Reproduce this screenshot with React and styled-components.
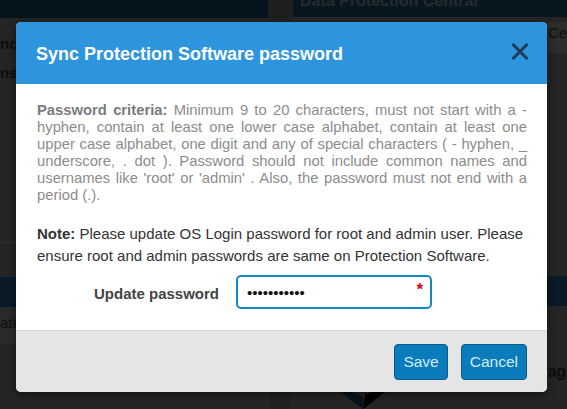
import React from "react";
import styled, { createGlobalStyle } from "styled-components";

const Global = createGlobalStyle`
  html, body { margin: 0; padding: 0; background: #242424; }
  body { font-family: "Liberation Sans", Arial, Helvetica, sans-serif; }
  * { box-sizing: border-box; }
`;

const Page = styled.div`
  position: relative;
  width: 567px;
  height: 409px;
  overflow: hidden;
  background: #252525;
  display: flex;
  flex-direction: column;
`;

const TopBar = styled.div`
  display: grid;
  grid-template-columns: 268px 25px 1fr;
  height: 18px;
  flex-shrink: 0;
`;

const NavLeft = styled.div`
  background: #05131c;
`;

const NavGap = styled.div`
  background: #1f1f1f;
`;

const Brand = styled.div`
  background: #08161f;
  overflow: hidden;
  padding-left: 7px;
  margin-bottom: 1px;
`;

const BrandText = styled.span`
  display: block;
  margin-top: -7px;
  font-size: 16px;
  line-height: 16px;
  font-weight: bold;
  color: #252b30;
  white-space: nowrap;
`;

const Main = styled.div`
  flex: 1;
  display: grid;
  grid-template-columns: 268px 25px 1fr;
`;

const Column = styled.div`
  display: flex;
  flex-direction: column;
  min-width: 0;
  overflow: hidden;
`;

const Divider = styled.div`
  background: #222;
  border-left: 1px solid #2a2a2a;
  border-right: 1px solid #2a2a2a;
`;

const NavList = styled.div`
  display: flex;
  flex-direction: column;
  padding-top: 11px;
  height: 225px;
  border-bottom: 1px solid #303030;
`;

const NavItem = styled.div`
  font-size: 15px;
  line-height: 29px;
  font-weight: bold;
  color: #0e0e0e;
  white-space: nowrap;
`;

const Spacer = styled.div`
  height: ${(p) => p.$h}px;
  flex-shrink: 0;
`;

const Band = styled.div`
  height: 30px;
  background: #0a1a26;
  flex-shrink: 0;
`;

const TableRow = styled.div`
  height: 38px;
  background: #2a2a2a;
  font-size: 15px;
  line-height: 32px;
  color: #0f0f0f;
  white-space: nowrap;
  flex-shrink: 0;
`;

const PanelHead = styled.div`
  height: 31px;
  margin-top: 4px;
  background: #2c2c2c;
  font-size: 15px;
  line-height: 22px;
  color: #101010;
  padding-left: 255px;
  white-space: nowrap;
  flex-shrink: 0;
`;

const PanelBody = styled.div`
  flex: 1;
  display: flex;
  align-items: flex-end;
  justify-content: center;
`;

const PanelLabel = styled.div`
  font-size: 16px;
  font-weight: bold;
  color: #0c0c0c;
  white-space: nowrap;
  padding-left: 231px;
  padding-top: 22px;
`;

const Logo = styled.svg`
  display: block;
  margin-left: 52px;
  margin-top: 8px;
`;

const Modal = styled.div`
  position: absolute;
  left: 16px;
  top: 22px;
  width: 531px;
  background: #fff;
  border-radius: 5px;
  overflow: hidden;
  box-shadow: 0 3px 10px rgba(0, 0, 0, 0.5);
`;

const Header = styled.div`
  height: 62px;
  background: #2d95dd;
  display: flex;
  align-items: center;
  justify-content: space-between;
  padding: 0 18px 0 20px;
`;

const Title = styled.h4`
  margin: 0;
  font-size: 18px;
  font-weight: bold;
  color: #fff;
  padding-top: 2px;
`;

const CloseButton = styled.button`
  border: 0;
  background: none;
  padding: 0;
  width: 18px;
  height: 18px;
  display: flex;
  align-items: center;
  justify-content: center;
  cursor: pointer;
  margin-top: -4px;
`;

const Body = styled.div`
  padding: 18px 20px 21px 21px;
`;

const Criteria = styled.p`
  margin: 0;
  font-size: 14.8px;
  line-height: 17px;
  color: #8c8c8c;
  text-align: justify;
  strong {
    color: #7b7b7b;
  }
`;

const Note = styled.p`
  margin: 19px 0 0;
  font-size: 15px;
  line-height: 22px;
  color: #333;
  strong {
    color: #333;
  }
`;

const FormRow = styled.div`
  display: grid;
  grid-template-columns: 182px 196px;
  column-gap: 17px;
  align-items: center;
  margin-top: 8px;
`;

const Label = styled.label`
  text-align: right;
  font-size: 15px;
  font-weight: bold;
  color: #444;
  padding-top: 3px;
`;

const InputWrap = styled.div`
  position: relative;
  height: 34px;
`;

const Input = styled.input`
  width: 100%;
  height: 34px;
  border: 2px solid #1586c7;
  border-radius: 5px;
  padding: 0 9px;
  font-family: "Liberation Sans", Arial, sans-serif;
  font-size: 15px;
  color: #111;
  outline: none;
  background: #fff;
`;

const Required = styled.span`
  position: absolute;
  right: 9px;
  top: 6px;
  color: #d0021b;
  font-size: 17px;
  font-weight: bold;
  line-height: 17px;
`;

const Footer = styled.div`
  border-top: 1px solid #d4d4d4;
  background: #e5e5e5;
  padding: 13px 20px 12px;
  display: flex;
  justify-content: flex-end;
  gap: 13px;
`;

const Button = styled.button`
  height: 36px;
  padding: 0 8px;
  border: 1px solid #0b5a87;
  border-radius: 4px;
  background: #0a7cbb;
  color: #d2eaf8;
  font-family: "Liberation Sans", Arial, sans-serif;
  font-size: 15.5px;
  cursor: pointer;
`;

export default function App() {
  return (
    <>
      <Global />
      <Page>
        <TopBar>
          <NavLeft />
          <NavGap />
          <Brand>
            <BrandText>Data Protection Central</BrandText>
          </Brand>
        </TopBar>
        <Main>
          <Column>
            <NavList>
              <NavItem>nodes</NavItem>
              <NavItem>nstances</NavItem>
            </NavList>
            <Spacer $h={34} />
            <Band />
            <TableRow>ate</TableRow>
          </Column>
          <Divider />
          <Column>
            <PanelHead>Central</PanelHead>
            <Spacer $h={223} />
            <Band />
            <PanelBody>
              <div>
                <PanelLabel>Storage</PanelLabel>
                <Logo width="52" height="20" viewBox="0 0 52 20">
                  <path d="M0 0 L26 20 L26 8 L10 0 Z" fill="#07141d" />
                  <path d="M52 0 L26 20 L28 6 L42 0 Z" fill="#020202" />
                </Logo>
              </div>
            </PanelBody>
          </Column>
        </Main>

        <Modal role="dialog">
          <Header>
            <Title>Sync Protection Software password</Title>
            <CloseButton aria-label="Close">
              <svg width="18" height="17" viewBox="0 0 18 17">
                <path
                  d="M1.5 1 L16.5 16 M16.5 1 L1.5 16"
                  stroke="#1d3a57"
                  strokeWidth="3"
                  strokeLinecap="butt"
                />
              </svg>
            </CloseButton>
          </Header>
          <Body>
            <Criteria>
              <strong>Password criteria:</strong> Minimum 9 to 20 characters, must not
              start with a - hyphen, contain at least one lower case alphabet, contain at
              least one upper case alphabet, one digit and any of special characters ( -
              hyphen, _ underscore, . dot ). Password should not include common names and
              usernames like 'root' or 'admin' . Also, the password must not end with a
              period (.).
            </Criteria>
            <Note>
              <strong>Note:</strong> Please update OS Login password for root and admin
              user. Please ensure root and admin passwords are same on Protection Software.
            </Note>
            <FormRow>
              <Label htmlFor="pw">Update password</Label>
              <InputWrap>
                <Input id="pw" type="password" defaultValue="abcdefghijk" />
                <Required>*</Required>
              </InputWrap>
            </FormRow>
          </Body>
          <Footer>
            <Button>Save</Button>
            <Button>Cancel</Button>
          </Footer>
        </Modal>
      </Page>
    </>
  );
}
